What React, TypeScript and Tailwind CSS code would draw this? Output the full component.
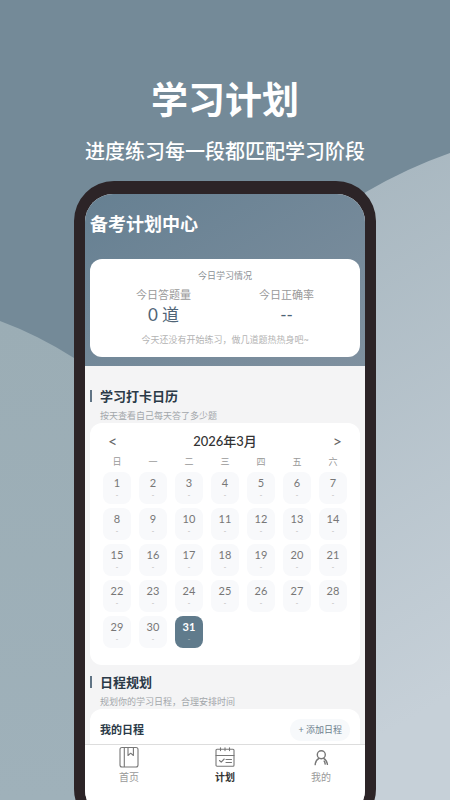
import type { ReactNode } from "react";

const weekDays = ["日", "一", "二", "三", "四", "五", "六"];
const days = Array.from({ length: 31 }, (_, i) => i + 1);
const today = 31;

const BookIcon = () => (
  <svg
    viewBox="0 0 20 22"
    className="w-5 h-[22px]"
    fill="none"
    stroke="currentColor"
    strokeWidth="1.1"
    strokeLinejoin="round"
  >
    <rect x="1" y="1.5" width="18" height="19.5" rx="2" />
    <path d="M5.3 1.5v19.5M9 1.5v8l2.7-2.3 2.7 2.3v-8" />
  </svg>
);

const PlanIcon = () => (
  <svg
    viewBox="0 0 20 22"
    className="w-5 h-[22px]"
    fill="none"
    stroke="currentColor"
    strokeWidth="1.1"
    strokeLinecap="round"
    strokeLinejoin="round"
  >
    <rect x="1" y="3.2" width="18" height="17" rx="1" />
    <path d="M1 9.5h18M5.5 1.8v2.8M14.5 1.8v2.8M10 1.8v2.8M4.5 14.5l1.7 1.7 3-3.2M11 13.5h5.5M11 16.5h5.5" />
  </svg>
);

const UserIcon = () => (
  <svg
    viewBox="0 0 20 22"
    className="w-5 h-[22px]"
    fill="none"
    stroke="currentColor"
    strokeWidth="1.4"
    strokeLinecap="round"
  >
    <circle cx="10.3" cy="8.8" r="4" />
    <path d="M4.2 18.6c.2-3 1.5-5 3.8-6.2M12.6 12.4c2.200 1.200 3.400 3 3.800 6M13.200 15.200c.5.8.8 1.700 1 2.800" />
  </svg>
);

const SectionTitle = ({ title, note }: { title: string; note: string }) => (
  <div className="relative pl-[10px]">
    <span className="absolute left-0 top-[6px] w-[2px] h-3 bg-[#607485]" />
    <h2 className="text-[13px] leading-6 font-bold text-[#2b3a48]">{title}</h2>
    <p className="text-[9px] leading-[15px] text-[#a3a7ab]">{note}</p>
  </div>
);

type TabProps = { label: string; icon: ReactNode; active?: boolean };

const Tab = ({ label, icon, active }: TabProps) => (
  <a href="#" className="flex flex-col items-center pb-8 text-[#777]">
    {icon}
    <span
      className={
        active
          ? "text-[10px] leading-[18px] font-bold text-[#333]"
          : "text-[10px] leading-[18px] text-[#999]"
      }
    >
      {label}
    </span>
  </a>
);

const App = () => {
  return (
    <div className="relative h-screen overflow-hidden bg-[#748a98] font-['Lato','Noto_Sans_CJK_SC',sans-serif]">
      <svg
        viewBox="0 0 450 800"
        preserveAspectRatio="none"
        className="absolute inset-0 w-full h-full"
      >
        <defs>
          <linearGradient id="left" x1="0" y1="0" x2="0" y2="1">
            <stop offset="0" stopColor="#9badb5" />
            <stop offset="1" stopColor="#9fb1ba" />
          </linearGradient>
          <linearGradient id="right" x1="0" y1="0" x2="0.2" y2="1">
            <stop offset="0" stopColor="#a3b3bc" />
            <stop offset="1" stopColor="#c6d0d8" />
          </linearGradient>
        </defs>
        <path d="M0 321Q38 335 74 358L225 470V800H0Z" fill="url(#left)" />
        <path d="M450 153Q407 168 366 192L225 300V800H450Z" fill="url(#right)" />
      </svg>

      <main className="relative flex flex-col items-center">
        <h1 className="pt-[72px] text-[37px] leading-[56px] font-bold text-white">
          学习计划
        </h1>
        <p className="pt-2 text-[20px] leading-[30px] font-medium text-white">
          进度练习每一段都匹配学习阶段
        </p>

        <div className="mt-[15px] w-2/3 max-w-[280px] box-content border-x-[11px] border-t-[13px] border-b-[11px] border-[#2c2427] rounded-[40px] bg-[#2c2427]">
          <div className="rounded-[28px] overflow-hidden bg-[#f4f4f5]">
            <header className="px-[5px] pt-[17px] pb-[9px] bg-linear-to-br from-[#668092] to-[#7f909f]">
              <h2 className="text-[18px] leading-[26px] font-bold text-white">
                备考计划中心
              </h2>
              <section className="mt-[22px] pt-[9px] pb-[9px] rounded-xl bg-white text-center">
                <h3 className="text-[9px] leading-4 text-[#8b9095]">
                  今日学习情况
                </h3>
                <div className="grid grid-cols-2 px-3">
                  <div>
                    <p className="pt-[3px] text-[11px] leading-4 text-[#999]">
                      今日答题量
                    </p>
                    <p className="text-[17px] leading-6 text-[#4f6476]">
                      0 道
                    </p>
                  </div>
                  <div>
                    <p className="pt-[3px] text-[11px] leading-4 text-[#999]">
                      今日正确率
                    </p>
                    <p className="text-[17px] leading-6 text-[#4f6476]">--</p>
                  </div>
                </div>
                <p className="pt-[5px] text-[9px] leading-4 text-[#b3b3b3]">
                  今天还没有开始练习，做几道题热热身吧~
                </p>
              </section>
            </header>

            <div className="px-[5px] pt-[18px]">
              <SectionTitle
                title="学习打卡日历"
                note="按天查看自己每天答了多少题"
              />
              <section className="px-[9px] pt-2 pb-[13px] rounded-xl bg-white">
                <div className="flex justify-between items-center px-[9px]">
                  <button
                    aria-label="上个月"
                    className="text-[16px] leading-5 text-[#666]"
                  >
                    &lt;
                  </button>
                  <h3 className="text-[13px] leading-5 font-medium text-[#333]">
                    2026年3月
                  </h3>
                  <button
                    aria-label="下个月"
                    className="text-[16px] leading-5 text-[#666]"
                  >
                    &gt;
                  </button>
                </div>
                <table className="w-full table-fixed border-separate border-spacing-0 text-center">
                  <thead>
                    <tr>
                      {weekDays.map((day) => (
                        <th
                          key={day}
                          className="pt-[2px] pb-px text-[9px] leading-[18px] font-normal text-[#999]"
                        >
                          {day}
                        </th>
                      ))}
                    </tr>
                  </thead>
                  <tbody>
                    {[0, 7, 14, 21, 28].map((start) => (
                      <tr key={start}>
                        {days.slice(start, start + 7).map((day) => (
                          <td key={day} className="px-1 pb-1">
                            <button
                              className={
                                day === today
                                  ? "w-full h-8 rounded-lg bg-[#607b8c] text-white font-bold"
                                  : "w-full h-8 rounded-lg bg-[#f8f9fb] text-[#777]"
                              }
                            >
                              <span className="block text-[11px] leading-[14px]">
                                {day}
                              </span>
                              <span className="block text-[8px] leading-[10px] font-normal text-[#bbb]">
                                -
                              </span>
                            </button>
                          </td>
                        ))}
                      </tr>
                    ))}
                  </tbody>
                </table>
              </section>
            </div>

            <div className="px-[5px] pt-[5px]">
              <SectionTitle
                title="日程规划"
                note="规划你的学习日程，合理安排时间"
              />
              <section className="flex justify-between items-center pt-[10px] pb-[3px] px-[10px] rounded-t-xl bg-white">
                <h3 className="text-[11px] leading-4 font-bold text-[#2b3a48]">
                  我的日程
                </h3>
                <button className="px-2 rounded-full bg-[#f7f9fb] text-[9px] leading-[22px] text-[#6d7f8d]">
                  + 添加日程
                </button>
              </section>
            </div>

            <nav className="flex justify-between px-[34px] pt-px border-t border-[#ddd] bg-white">
              <Tab label="首页" icon={<BookIcon />} />
              <Tab label="计划" icon={<PlanIcon />} active />
              <Tab label="我的" icon={<UserIcon />} />
            </nav>
          </div>
        </div>
      </main>
    </div>
  );
};

export default App;
